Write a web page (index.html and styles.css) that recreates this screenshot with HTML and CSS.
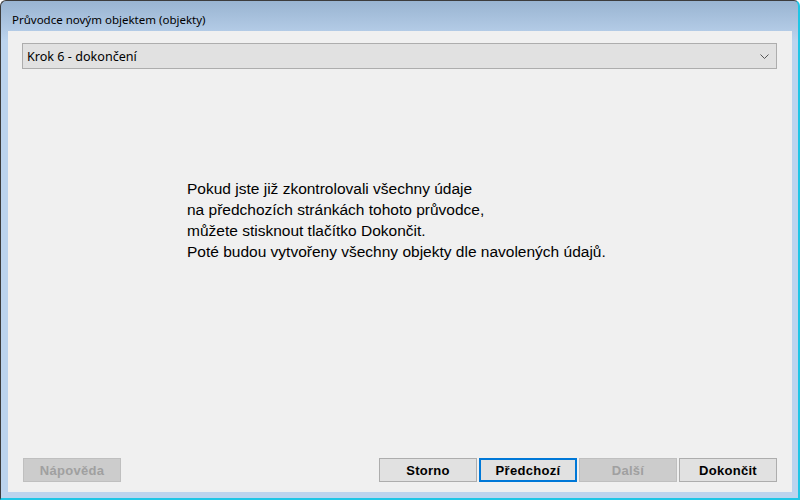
FILE: index.html
```html
<!DOCTYPE html>
<html lang="cs">
<head>
<meta charset="utf-8">
<title>Průvodce novým objektem (objekty)</title>
<link rel="stylesheet" href="styles.css">
</head>
<body>
<div class="window">
  <div class="titlebar">Průvodce novým objektem (objekty)</div>
  <div class="client">
    <div class="combo">
      <span class="combo-text">Krok 6 - dokončení</span>
      <svg class="chev" width="9" height="5" viewBox="0 0 9 5"><path d="M0.5 0.5 L4.5 4.5 L8.5 0.5" fill="none" stroke="#555" stroke-width="1"/></svg>
    </div>
    <div class="message">
      <p class="msg">Pokud jste již zkontrolovali všechny údaje<br>na předchozích stránkách tohoto průvodce,<br>můžete stisknout tlačítko Dokončit.<br>Poté budou vytvořeny všechny objekty dle navolených údajů.</p>
    </div>
    <div class="buttons">
      <button class="btn disabled">Nápověda</button>
      <div class="spacer"></div>
      <div class="right-buttons">
        <button class="btn">Storno</button>
        <button class="btn focused">Předchozí</button>
        <button class="btn disabled">Další</button>
        <button class="btn">Dokončit</button>
      </div>
    </div>
  </div>
</div>
</body>
</html>
```
FILE: styles.css
```css
html, body {
  margin: 0;
  padding: 0;
  width: 800px;
  height: 500px;
  overflow: hidden;
  background: #ffffff;
}
.window {
  box-sizing: border-box;
  width: 800px;
  height: 500px;
  display: flex;
  flex-direction: column;
  border-top: 1px solid #3c3c3c;
  border-left: 1px solid #3c3c3c;
  border-right: 2px solid #1fc6e6;
  border-bottom: 2px solid #1fc6e6;
  border-top-left-radius: 6px;
  border-top-right-radius: 6px;
  background: linear-gradient(to bottom, #99b4d1 0px, #b3cbe6 30px, #bcd4ee 40px, #bcd4ee 100%);
  padding: 0 6px 6px 7px;
}
.titlebar {
  box-sizing: border-box;
  height: 30px;
  flex: none;
  font-family: "Noto Sans", "Open Sans", sans-serif;
  font-size: 11.5px;
  line-height: 23px;
  color: #000;
  padding-left: 4px;
  padding-top: 7px;
}
.client {
  flex: 1;
  background: #f0f0f0;
  display: flex;
  flex-direction: column;
  padding: 12px 15px 10px 14px;
}
.combo {
  box-sizing: border-box;
  height: 26px;
  flex: none;
  border: 1px solid #adadad;
  background: #e1e1e1;
  display: flex;
  align-items: center;
  padding: 0 7px 0 4px;
}
.combo-text {
  flex: 1;
  font-family: "Noto Sans", "Open Sans", sans-serif;
  font-size: 12.6px;
  color: #000;
}
.chev {
  display: block;
  margin-top: 1px;
}
.message {
  flex: 1;
  padding-left: 165px;
  padding-top: 109px;
}
.msg {
  margin: 0;
  font-family: "Liberation Sans", Arial, sans-serif;
  font-size: 15.5px;
  line-height: 21px;
  color: #000;
}
.buttons {
  flex: none;
  display: flex;
  align-items: center;
  padding-left: 1px;
}
.spacer {
  flex: 1;
}
.right-buttons {
  display: flex;
  gap: 2px;
}
.btn {
  box-sizing: border-box;
  width: 98px;
  height: 24px;
  margin: 0;
  padding: 0;
  border: 1px solid #adadad;
  background: #e1e1e1;
  font-family: "Liberation Sans", Arial, sans-serif;
  font-weight: bold;
  font-size: 13px;
  letter-spacing: 0.3px;
  color: #000;
}
.btn.disabled {
  background: #cccccc;
  border-color: #bfbfbf;
  color: #a0a0a0;
}
.btn.focused {
  border: 2px solid #0078d7;
}
```
